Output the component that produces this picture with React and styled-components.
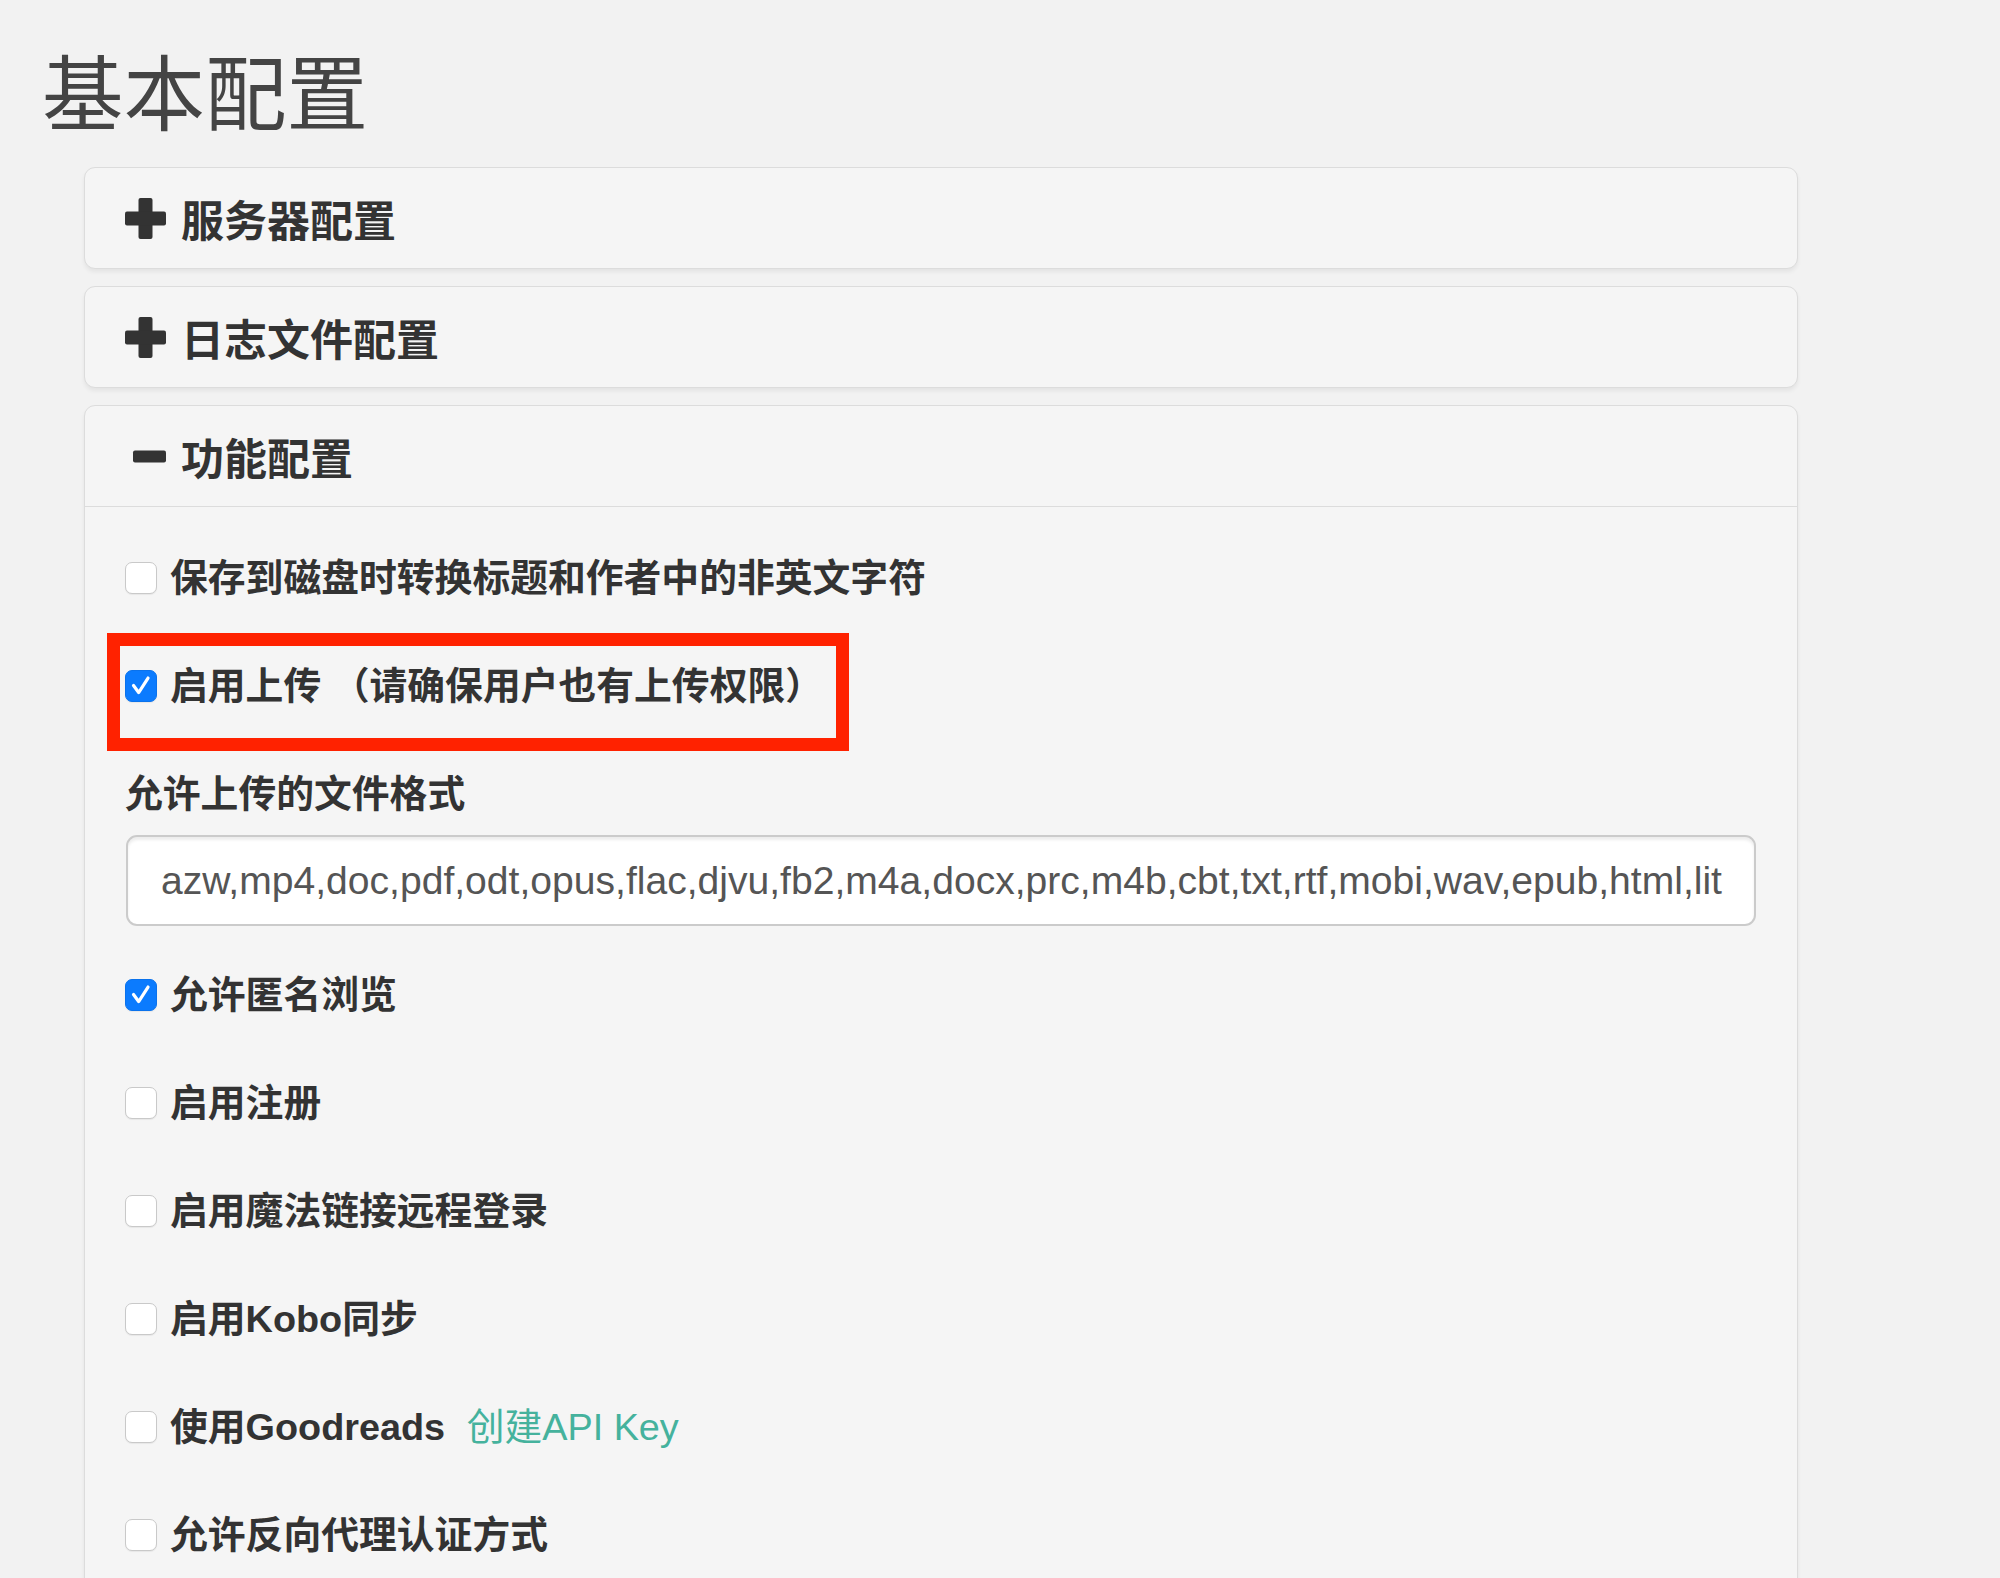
import React from 'react';
import styled, { createGlobalStyle, css } from 'styled-components';

const GlobalStyle = createGlobalStyle`
  body {
    margin: 0;
    background: #f2f2f2;
    font-family: "Liberation Sans", "Noto Sans CJK SC", sans-serif;
    color: #333;
  }
`;

const Page = styled.div`
  padding: 52px 0 0 42px;
`;

const Title = styled.h2`
  margin: 0 0 27px;
  font-size: 81.5px;
  line-height: 88px;
  font-weight: 400;
  color: #444;
`;

const Accordion = styled.div`
  margin-left: 42px;
  width: 1714px;
  display: flex;
  flex-direction: column;
  gap: 17px;
`;

const Panel = styled.div`
  background: #f5f5f5;
  border: 1px solid #dcdcdc;
  border-radius: 11px;
  box-shadow: 0 3px 4px rgba(0, 0, 0, 0.06);
`;

const Heading = styled.div`
  height: 100px;
  display: flex;
  align-items: center;
  gap: 15px;
  padding-left: 40px;
  font-size: 43px;
  font-weight: 700;
  color: #333;
  ${(p) => p.$open && css`border-bottom: 1px solid #dcdcdc;`}
`;

const Body = styled.div`
  padding: 44px 41px 0 40px;
  display: flex;
  flex-direction: column;
`;

const CheckRow = styled.label`
  position: relative;
  display: flex;
  align-items: center;
  gap: 13px;
  height: 54px;
  margin-bottom: 54px;
  font-size: 37.8px;
  font-weight: 700;
  color: #333;

  ${(p) =>
    p.$highlight &&
    css`
      &::after {
        content: '';
        position: absolute;
        top: -26px;
        bottom: -38px;
        left: -18px;
        width: 742px;
        border: 13px solid #ff2200;
        box-sizing: border-box;
        pointer-events: none;
      }
    `}
`;

const LabelText = styled.span`
  margin-top: -7px;
`;

const Box = styled.span`
  flex: none;
  width: 32px;
  height: 32px;
  box-sizing: border-box;
  border-radius: 7px;
  display: flex;
  align-items: center;
  justify-content: center;
  background: ${(p) => (p.$checked ? '#0b7bfe' : '#fff')};
  border: 1.5px solid ${(p) => (p.$checked ? '#0a72ec' : '#c9c9c9')};
  box-shadow: 0 1px 1px rgba(0, 0, 0, 0.06);
`;

const FieldLabel = styled.div`
  height: 54px;
  display: flex;
  align-items: center;
  margin-bottom: 14px;
  font-size: 37.8px;
  font-weight: 700;
  color: #333;
`;

const TextInput = styled.input`
  height: 91px;
  box-sizing: border-box;
  margin: 0 0 42px 1px;
  padding: 0 20px 0 33px;
  border: 2px solid #cbcbcb;
  border-radius: 11px;
  background: #fff;
  box-shadow: inset 0 3px 3px rgba(0, 0, 0, 0.075);
  font-family: "Liberation Sans", sans-serif;
  font-size: 39.1px;
  color: #555;
  outline: none;
`;

const KeyLink = styled.a`
  margin-left: 11px;
  font-weight: 400;
  color: #45b29d;
  text-decoration: none;
`;

const PlusIcon = () => (
  <svg width="41" height="41" viewBox="0 0 41 41">
    <rect x="13.5" y="0" width="14" height="41" rx="2" fill="#333" />
    <rect x="0" y="13.5" width="41" height="14" rx="2" fill="#333" />
  </svg>
);

const MinusIcon = () => (
  <svg width="41" height="41" viewBox="0 0 41 41">
    <rect x="8" y="14.5" width="33" height="12" rx="2" fill="#333" />
  </svg>
);

const Checkbox = ({ checked }) => (
  <Box $checked={checked}>
    {checked && (
      <svg width="32" height="32" viewBox="0 0 32 32">
        <path
          d="M8 15.5 L13.5 23 L23.5 7.5"
          fill="none"
          stroke="#fff"
          strokeWidth="3.4"
          strokeLinecap="round"
          strokeLinejoin="round"
        />
      </svg>
    )}
  </Box>
);

const Option = ({ checked, highlight, children }) => (
  <CheckRow $highlight={highlight}>
    <Checkbox checked={checked} />
    <LabelText>{children}</LabelText>
  </CheckRow>
);

const formats =
  'azw,mp4,doc,pdf,odt,opus,flac,djvu,fb2,m4a,docx,prc,m4b,cbt,txt,rtf,mobi,wav,epub,html,lit';

export default function App() {
  return (
    <>
      <GlobalStyle />
      <Page>
        <Title>基本配置</Title>
        <Accordion>
          <Panel>
            <Heading>
              <PlusIcon />
              服务器配置
            </Heading>
          </Panel>
          <Panel>
            <Heading>
              <PlusIcon />
              日志文件配置
            </Heading>
          </Panel>
          <Panel>
            <Heading $open>
              <MinusIcon />
              功能配置
            </Heading>
            <Body>
              <Option>保存到磁盘时转换标题和作者中的非英文字符</Option>
              <Option checked highlight>
                启用上传 （请确保用户也有上传权限）
              </Option>
              <FieldLabel>
                <LabelText>允许上传的文件格式</LabelText>
              </FieldLabel>
              <TextInput defaultValue={formats} />
              <Option checked>允许匿名浏览</Option>
              <Option>启用注册</Option>
              <Option>启用魔法链接远程登录</Option>
              <Option>启用Kobo同步</Option>
              <Option>
                使用Goodreads <KeyLink href="#">创建API Key</KeyLink>
              </Option>
              <Option>允许反向代理认证方式</Option>
            </Body>
          </Panel>
        </Accordion>
      </Page>
    </>
  );
}
